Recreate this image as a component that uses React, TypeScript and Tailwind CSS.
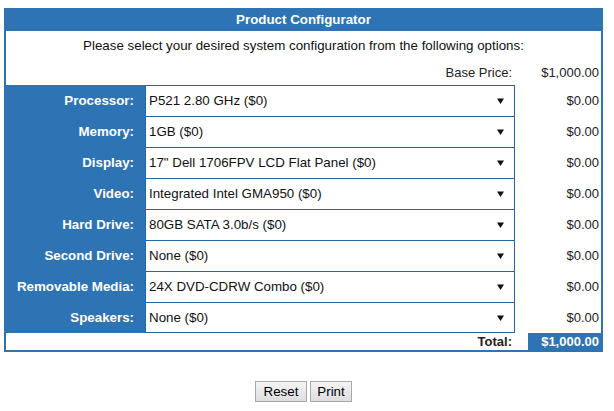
import React from "react";

const rows: [string, string][] = [
  ["Processor:", "P521 2.80 GHz ($0)"],
  ["Memory:", "1GB ($0)"],
  ["Display:", "17\" Dell 1706FPV LCD Flat Panel ($0)"],
  ["Video:", "Integrated Intel GMA950 ($0)"],
  ["Hard Drive:", "80GB SATA 3.0b/s ($0)"],
  ["Second Drive:", "None ($0)"],
  ["Removable Media:", "24X DVD-CDRW Combo ($0)"],
  ["Speakers:", "None ($0)"],
];

function Arrow() {
  return (
    <svg width="7" height="6" viewBox="0 0 7 6" className="shrink-0">
      <path d="M0 0.5 H7 L3.5 6 Z" fill="#111" />
    </svg>
  );
}

export default function App() {
  return (
    <div
      className="bg-white w-[614px] h-[411px] pt-[8px] pl-[4px] text-black"
      style={{ fontFamily: '"Liberation Sans", Arial, sans-serif' }}
    >
      <div className="w-[599px] border-2 border-t-0 border-[#2e74b5]">
        <div className="h-[23px] bg-[#2e74b5] flex items-center justify-center text-white font-bold text-[13.33px] leading-[16px] pt-[1px]">
          Product Configurator
        </div>
        <div className="h-[33px] pt-[7px] text-center text-[13.33px] leading-[16px] text-[#111]">
          Please select your desired system configuration from the following options:
        </div>
        <div className="h-[21px] pt-[1px] grid grid-cols-[139px_370px_1fr] text-[13px] leading-[16px] text-[#222]">
          <div />
          <div className="text-right pr-[3px]">Base Price:</div>
          <div className="text-right pr-[2px]">$1,000.00</div>
        </div>
        {rows.map(([label, value], i) => (
          <div key={label} className="h-[31px] grid grid-cols-[139px_370px_1fr]">
            <div className="bg-[#2e74b5] text-white font-bold text-[13.33px] leading-[16px] flex items-center justify-end pr-[11px]">
              {label}
            </div>
            <div
              className={
                i === rows.length - 1
                  ? "border border-[#2367a9] flex items-center justify-between pl-[3px] pr-[10px] text-[13.33px] leading-[16px] text-[#111]"
                  : "border border-b-0 border-[#2367a9] flex items-center justify-between pl-[3px] pr-[10px] text-[13.33px] leading-[16px] text-[#111]"
              }
            >
              <span>{value}</span>
              <Arrow />
            </div>
            <div className="flex items-center justify-end pr-[2px] text-[13px] leading-[16px] text-[#222]">
              $0.00
            </div>
          </div>
        ))}
        <div className="h-[17px] grid grid-cols-[139px_370px_13px_1fr] text-[13px] leading-[16px]">
          <div />
          <div className="text-right pr-[3px] font-bold text-[#222] flex items-center justify-end">Total:</div>
          <div />
          <div className="bg-[#2e74b5] text-white font-bold flex items-center justify-end pr-[2px]">
            $1,000.00
          </div>
        </div>
      </div>
      <div className="w-[599px] mt-[29px] flex justify-center gap-[3px]">
        <button className="w-[52px] h-[21px] border border-[#a9a9a9] bg-gradient-to-b from-[#f4f4f4] to-[#dedede] text-[13.33px] leading-[16px] text-black">
          Reset
        </button>
        <button className="w-[42px] h-[21px] border border-[#a9a9a9] bg-gradient-to-b from-[#f4f4f4] to-[#dedede] text-[13.33px] leading-[16px] text-black">
          Print
        </button>
      </div>
    </div>
  );
}
